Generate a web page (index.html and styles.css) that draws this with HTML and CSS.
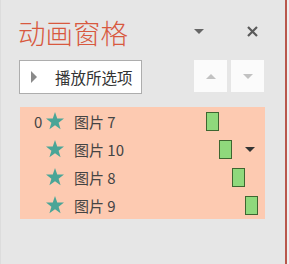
FILE: index.html
```html
<!DOCTYPE html>
<html>
<head>
  <meta charset="UTF-8">
  <title>动画窗格</title>
  <link rel="stylesheet" href="styles.css">
</head>
<body>
  <div class="pane">
    <div class="pane-header">
      <h2 class="pane-title">动画窗格</h2>
      <span class="icon-menu"></span>
      <span class="icon-close">
        <svg width="11" height="11" viewBox="0 0 11 11"><path d="M1 1 L10 10 M10 1 L1 10" stroke="#5a5a5a" stroke-width="2.2"/></svg>
      </span>
    </div>

    <div class="toolbar">
      <button class="play-btn"><span class="play-icon"></span>播放所选项</button>
      <div class="order-btns">
        <button class="order-btn"><span class="arrow-up"></span></button>
        <button class="order-btn"><span class="arrow-down"></span></button>
      </div>
    </div>

    <ul class="anim-list">
      <li class="anim-row">
        <span class="anim-num">0</span>
        <svg class="anim-star" viewBox="0 0 18 18"><polygon points="9,0 11.23,6.43 18,6.56 12.61,10.67 14.59,17.2 9,13.3 3.41,17.2 5.39,10.67 0,6.56 6.77,6.43"/></svg>
        <span class="anim-name">图片 7</span>
        <span class="timeline"><span class="bar" style="margin-left: 5px"></span></span>
      </li>
      <li class="anim-row">
        <span class="anim-num"></span>
        <svg class="anim-star" viewBox="0 0 18 18"><polygon points="9,0 11.23,6.43 18,6.56 12.61,10.67 14.59,17.2 9,13.3 3.41,17.2 5.39,10.67 0,6.56 6.77,6.43"/></svg>
        <span class="anim-name">图片 10</span>
        <span class="timeline"><span class="bar" style="margin-left: 18px"></span></span>
        <span class="row-caret"></span>
      </li>
      <li class="anim-row">
        <span class="anim-num"></span>
        <svg class="anim-star" viewBox="0 0 18 18"><polygon points="9,0 11.23,6.43 18,6.56 12.61,10.67 14.59,17.2 9,13.3 3.41,17.2 5.39,10.67 0,6.56 6.77,6.43"/></svg>
        <span class="anim-name">图片 8</span>
        <span class="timeline"><span class="bar" style="margin-left: 31px"></span></span>
      </li>
      <li class="anim-row">
        <span class="anim-num"></span>
        <svg class="anim-star" viewBox="0 0 18 18"><polygon points="9,0 11.23,6.43 18,6.56 12.61,10.67 14.59,17.2 9,13.3 3.41,17.2 5.39,10.67 0,6.56 6.77,6.43"/></svg>
        <span class="anim-name">图片 9</span>
        <span class="timeline"><span class="bar" style="margin-left: 44px"></span></span>
      </li>
    </ul>
  </div>
</body>
</html>
```

FILE: styles.css
```css
:root {
  --pane-bg: #e6e6e6; --accent: #d8593f; --text-main: #3a3a3a;
  --select-bg: #fdcab1; --star: #4aa597; --bar-fill: #8fd97c; --bar-border: #3e6630;
}
html { box-sizing: border-box; background: #efefef; }
*, *:before, *:after { box-sizing: inherit; }
body {
  margin: 0; font-family: "Noto Sans CJK SC", "Noto Sans", sans-serif;
  color: var(--text-main);
}
.pane {
  width: 287px; height: 264px; background: var(--pane-bg);
  border-left: 1px solid #dcdcdc; border-right: 2px solid #b9574c;
  padding: 0 20px 0 18px;
}
.pane-header { display: flex; align-items: center; height: 36px; padding-top: 14px; box-sizing: content-box; }
.pane-title {
  flex: 1; margin: 0 0 0 -1px; font-size: 27.5px; font-weight: 300;
  color: var(--accent); line-height: 36px; letter-spacing: 0;
}
.icon-menu {
  width: 0; height: 0; margin-right: 43px; margin-top: -2px;
  border-left: 5px solid transparent; border-right: 5px solid transparent; border-top: 5px solid #666;
}
.icon-close { display: flex; margin-right: 7px; margin-top: -2px; }

.toolbar { display: flex; align-items: flex-start; margin-top: 10px; }
.play-btn {
  display: flex; align-items: center; width: 123px; height: 34px; padding: 0 0 0 11px;
  background: #fff; border: 1px solid #adadad; font: inherit; font-size: 15.5px; color: #333;
}
.play-icon {
  width: 0; height: 0; margin-right: 18px;
  border-top: 6px solid transparent; border-bottom: 6px solid transparent; border-left: 6px solid #8a8a8a;
}
.order-btns { display: flex; gap: 4px; margin-left: auto; margin-right: 1px; }
.order-btn {
  display: flex; align-items: center; justify-content: center;
  width: 33px; height: 32px; padding: 0; background: #fbfbfb; border: 0;
}
.arrow-up, .arrow-down { width: 0; height: 0; border-left: 5px solid transparent; border-right: 5px solid transparent; }
.arrow-up { border-bottom: 5px solid #c2c2c2; }
.arrow-down { border-top: 5px solid #c2c2c2; }

.anim-list { list-style: none; margin: 13px 0 0 1px; padding: 0; background: var(--select-bg); }
.anim-row { position: relative; display: flex; align-items: center; height: 28px; padding-left: 14px; font-size: 15px; }
.anim-num { width: 8px; text-align: right; font-size: 15px; color: #444; }
.anim-star { width: 18px; height: 18px; margin-left: 4px; fill: var(--star); }
.anim-name { width: 127px; margin-left: 10px; color: #444; }
.timeline { display: flex; flex: 1; }
.bar { width: 13px; height: 19px; background: var(--bar-fill); border: 1px solid var(--bar-border); }
.row-caret {
  position: absolute; right: 10px; top: 12px; width: 0; height: 0;
  border-left: 5px solid transparent; border-right: 5px solid transparent; border-top: 5px solid #333;
}
```
